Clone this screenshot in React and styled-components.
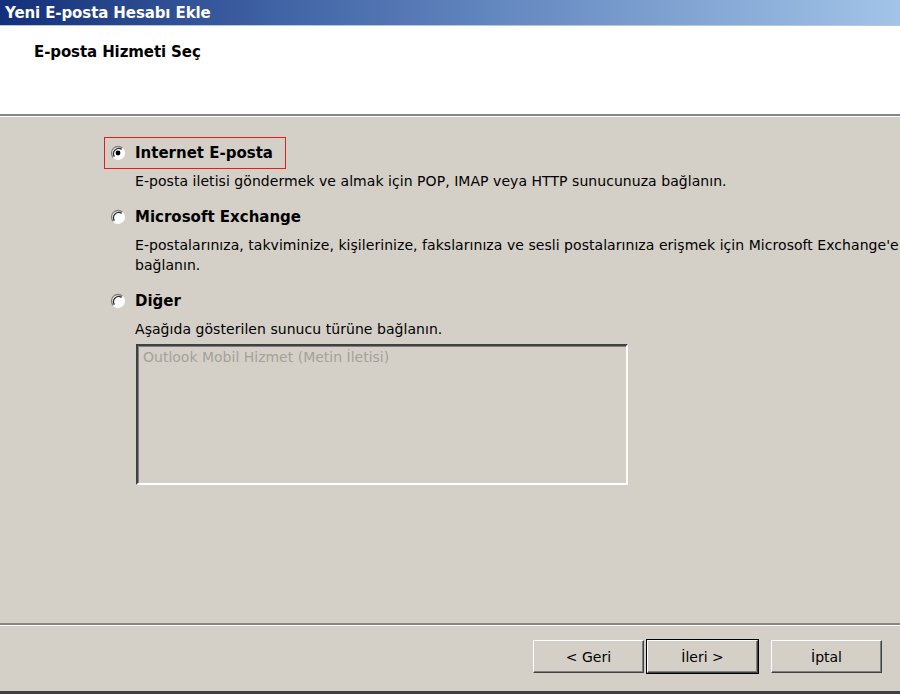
import styled, { createGlobalStyle } from "styled-components";

const GlobalStyle = createGlobalStyle`
  html, body {
    margin: 0;
    padding: 0;
    background: #d4d0c8;
  }
  * {
    box-sizing: border-box;
  }
`;

const options = [
  {
    id: "internet",
    label: "Internet E-posta",
    desc: ["E-posta iletisi göndermek ve almak için POP, IMAP veya HTTP sunucunuza bağlanın."],
    checked: true,
  },
  {
    id: "exchange",
    label: "Microsoft Exchange",
    desc: [
      "E-postalarınıza, takviminize, kişilerinize, fakslarınıza ve sesli postalarınıza erişmek için Microsoft Exchange'e",
      "bağlanın.",
    ],
  },
  {
    id: "other",
    label: "Diğer",
    desc: ["Aşağıda gösterilen sunucu türüne bağlanın."],
    list: ["Outlook Mobil Hizmet (Metin İletisi)"],
  },
];

// classic sunken radio button
const Radio = ({ checked }) => (
  <RadioIcon width="16" height="16" viewBox="0 0 16 16">
    <circle cx="8" cy="8" r="6.5" fill="#fff" />
    <path d="M12.6 3.4 A6.5 6.5 0 0 0 3.4 12.6" fill="none" stroke="#808080" strokeWidth="1.3" />
    <path d="M11.6 4.4 A5.2 5.2 0 0 0 4.4 11.6" fill="none" stroke="#303030" strokeWidth="1.3" />
    <path d="M3.4 12.6 A6.5 6.5 0 0 0 12.6 3.4" fill="none" stroke="#fafafa" strokeWidth="1.3" />
    {checked && <circle cx="8" cy="8" r="2.4" fill="#000" />}
  </RadioIcon>
);

const App = () => {
  return (
    <>
      <GlobalStyle />
      <Window>
        <TitleBar>Yeni E-posta Hesabı Ekle</TitleBar>
        <Header>
          <HeaderTitle>E-posta Hizmeti Seç</HeaderTitle>
        </Header>
        <Body>
          {options.map((opt) => (
            <Option key={opt.id}>
              <Choice $focused={opt.checked}>
                <Radio checked={opt.checked} />
                <ChoiceLabel>{opt.label}</ChoiceLabel>
              </Choice>
              <Desc>
                {opt.desc.map((line) => (
                  <div key={line}>{line}</div>
                ))}
              </Desc>
              {opt.list && (
                <ListBox>
                  {opt.list.map((item) => (
                    <ListItem key={item}>{item}</ListItem>
                  ))}
                </ListBox>
              )}
            </Option>
          ))}
        </Body>
        <Footer>
          <Button>&lt; Geri</Button>
          <Button $default>İleri &gt;</Button>
          <Button $spaced>İptal</Button>
        </Footer>
      </Window>
    </>
  );
};

const Window = styled.div`
  width: 900px;
  height: 694px;
  display: flex;
  flex-direction: column;
  background: #d4d0c8;
  font-family: "DejaVu Sans", Tahoma, sans-serif;
  color: #000;
  border-bottom: 3px solid #404040;
  overflow: hidden;
`;

const TitleBar = styled.div`
  height: 26px;
  flex: none;
  padding: 0 5px;
  display: flex;
  align-items: center;
  background: linear-gradient(to right, #13307a 0%, #3f62a4 30%, #6a8ec4 60%, #a2c4e8 100%);
  border-bottom: 1px solid #b8c8dc;
  color: #fff;
  font-weight: bold;
  font-size: 15px;
  letter-spacing: -0.1px;
`;

const Header = styled.div`
  height: 90px;
  flex: none;
  background: #fff;
  border-bottom: 2px solid #858585;
  box-shadow: 0 1px 0 #fff;
  padding: 17px 0 0 34px;
`;

const HeaderTitle = styled.div`
  font-size: 15px;
  font-weight: bold;
  letter-spacing: -0.1px;
`;

const Body = styled.div`
  flex: 1;
  padding: 21px 0 0 104px;
  display: flex;
  flex-direction: column;
  gap: 10px;
  border-bottom: 2px solid #8a8680;
  box-shadow: 0 1px 0 #fff;
`;

const Option = styled.div`
  display: flex;
  flex-direction: column;
`;

const Choice = styled.div`
  align-self: flex-start;
  height: 32px;
  min-width: 182px;
  display: flex;
  align-items: center;
  gap: 9px;
  padding: 0 10px 0 5px;
  border: 1px solid ${(p) => (p.$focused ? "#e02020" : "transparent")};
`;

const RadioIcon = styled.svg`
  flex: none;
  display: block;
`;

const ChoiceLabel = styled.span`
  font-size: 15px;
  font-weight: bold;
`;

const Desc = styled.div`
  padding: 2px 0 0 31px;
  font-size: 14px;
  line-height: 20px;
  letter-spacing: 0.05px;
  white-space: nowrap;
`;

const ListBox = styled.div`
  margin: 5px 0 0 32px;
  width: 492px;
  height: 141px;
  border-style: solid;
  border-width: 2px;
  border-color: #404040 #fff #fff #404040;
  box-shadow: inset 1px 1px 0 #808080;
  padding: 2px 5px;
`;

const ListItem = styled.div`
  font-size: 14px;
  color: #a4a09a;
  line-height: 18px;
`;

const Footer = styled.div`
  height: 66px;
  flex: none;
  display: flex;
  justify-content: flex-end;
  align-items: flex-start;
  padding: 15px 18px 0 0;
  gap: 3px;
`;

const Button = styled.button`
  width: 111px;
  height: 33px;
  margin-left: ${(p) => (p.$spaced ? "10px" : "0")};
  background: #d4d0c8;
  font-family: "DejaVu Sans", Tahoma, sans-serif;
  font-size: 14px;
  color: #000;
  border-style: solid;
  border-width: 1px;
  border-color: #fff #404040 #404040 #fff;
  box-shadow: inset -1px -1px 0 #808080;
  outline: ${(p) => (p.$default ? "1px solid #000" : "none")};
  padding: 0;
`;

export default App;
